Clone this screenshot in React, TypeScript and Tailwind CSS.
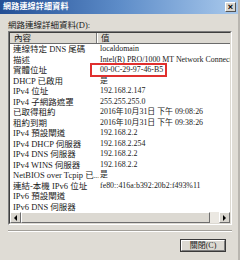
const rows: [string, string][] = [
  ["連線特定 DNS 尾碼", "localdomain"],
  ["描述", "Intel(R) PRO/1000 MT Network Connect"],
  ["實體位址", "00-0C-29-97-46-B5"],
  ["DHCP 已啟用", "是"],
  ["IPv4 位址", "192.168.2.147"],
  ["IPv4 子網路遮罩", "255.255.255.0"],
  ["已取得租約", "2016年10月31日 下午 09:08:26"],
  ["租約到期", "2016年10月31日 下午 09:38:26"],
  ["IPv4 預設閘道", "192.168.2.2"],
  ["IPv4 DHCP 伺服器", "192.168.2.254"],
  ["IPv4 DNS 伺服器", "192.168.2.2"],
  ["IPv4 WINS 伺服器", "192.168.2.2"],
  ["NetBIOS over Tcpip 已...", "是"],
  ["連結-本機 IPv6 位址", "fe80::416a:b392:20b2:f493%11"],
  ["IPv6 預設閘道", ""],
  ["IPv6 DNS 伺服器", ""],
];

const font = { fontFamily: '"Liberation Serif", "Noto Sans CJK TC", serif' };

const ArrowBtn = ({ dir }: { dir: "left" | "right" }) => (
  <div className="w-[11px] h-full bg-[#d8d5ce] border border-t-white border-l-white border-r-[#6e6e6e] border-b-[#6e6e6e] flex items-center justify-center">
    <div
      className={
        dir === "left"
          ? "w-0 h-0 border-y-[3px] border-y-transparent border-r-[3px] border-r-black"
          : "w-0 h-0 border-y-[3px] border-y-transparent border-l-[3px] border-l-black"
      }
    />
  </div>
);

export default function App() {
  return (
    <div
      className="relative w-[240px] h-[260px] overflow-hidden bg-[#dfdcd5] text-[#1a1a1a] border-r-2 border-r-[#b9b6b0]"
      style={font}
    >
      {/* title bar */}
      <div className="h-[14px] flex items-center justify-between bg-gradient-to-r from-[#244f95] via-[#5d8cc8] to-[#a9c9ec] pl-[3px] pr-[2px]">
        <span className="text-white text-[8px] font-bold leading-none tracking-[0.2px]">
          網路連線詳細資料
        </span>
        <div className="w-[11px] h-[10px] bg-[#d8d5ce] border border-t-white border-l-white border-r-[#555] border-b-[#555] flex items-center justify-center text-[9px] font-bold leading-none text-black" style={{ fontFamily: '"Liberation Sans", sans-serif' }}>
          ×
        </div>
      </div>

      <div className="px-[8px]">
        <div className="mt-[6px] h-[11px] text-[8.5px] leading-[11px]">網路連線詳細資料(D):</div>

        {/* list box */}
        <div className="w-[224px] border border-t-[#7d7d7d] border-l-[#7d7d7d] border-r-white border-b-white">
          <div className="border border-t-[#3f3f3f] border-l-[#3f3f3f] border-r-[#dcd9d2] border-b-[#dcd9d2]">
            {/* header */}
            <div className="flex h-[11px] bg-[#dcd9d2] border-b border-b-[#6b6b6b] text-[8.5px] leading-[10px]">
              <div className="w-[87px] pl-[4px] border-r border-r-[#7a7a7a]">內容</div>
              <div className="w-px bg-white" />
              <div className="pl-[3px]">值</div>
            </div>
            {/* rows */}
            <div className="bg-white">
              {rows.map(([k, v]) => (
                <div key={k} className="flex h-[10.5px] text-[8.5px] leading-[10.5px] whitespace-nowrap overflow-hidden">
                  <div className="w-[89px] pl-[3px] shrink-0 overflow-hidden">{k}</div>
                  <div className="pl-[1px] text-[7.9px]">{v}</div>
                </div>
              ))}
            </div>
            {/* scrollbar */}
            <div className="flex h-[11px] bg-[#ebe8e2]">
              <ArrowBtn dir="left" />
              <div className="w-[189px] h-full bg-[#dcd9d2] border border-t-white border-l-white border-r-[#6e6e6e] border-b-[#6e6e6e]" />
              <div className="flex-1" />
              <ArrowBtn dir="right" />
            </div>
          </div>
        </div>

        {/* separator */}
        <div className="mt-[5px] w-[224px] border-t border-t-[#a3a09a] border-b border-b-white" />

        {/* button */}
        <div className="flex justify-end mt-[7px] pr-[4px]">
          <div className="w-[46px] h-[13px] border border-[#3a3a3a]">
            <div className="h-full border border-t-white border-l-white border-r-[#7d7d7d] border-b-[#7d7d7d] bg-[#dcd9d2] flex items-center justify-center text-[8px] leading-none">
              關閉(C)
            </div>
          </div>
        </div>
      </div>

      {/* red highlight */}
      <div className="absolute left-[90px] top-[63px] w-[77px] h-[14px] border-2 border-[#e0302e]" />
    </div>
  );
}
